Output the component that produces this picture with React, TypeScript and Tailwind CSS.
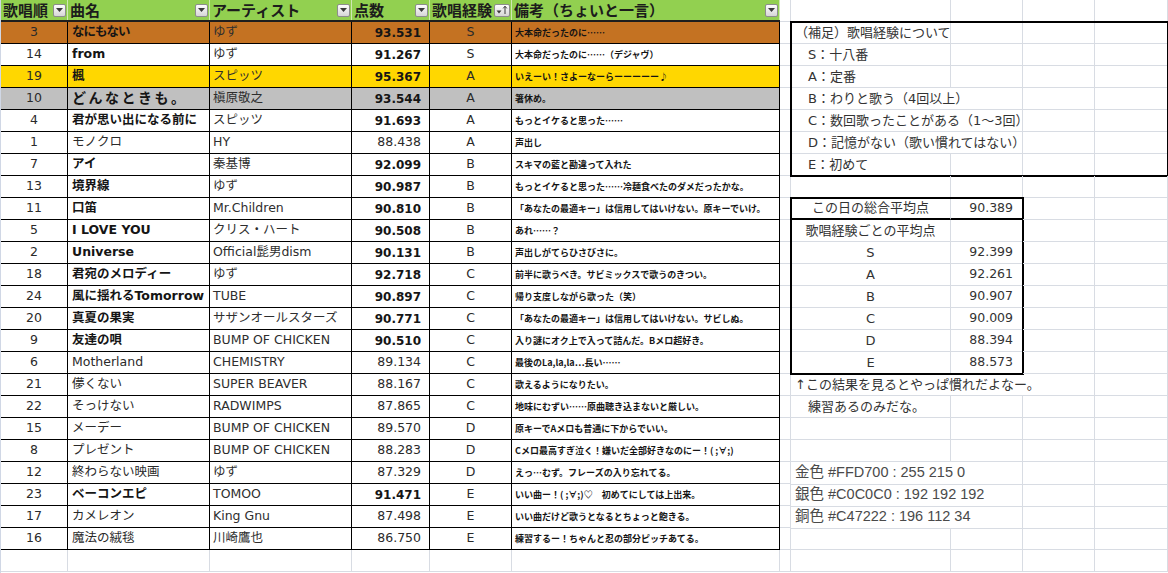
import React from "react";

type Row = { n: number; t: string; a: string; s: string; g: string; r: string; bg?: string; ts?: string };

const ROWS: Row[] = [
  { n: 3, t: "なにもない", a: "ゆず", s: "93.531", g: "S", r: "大本命だったのに……", bg: "bg-[#c47222]", ts: "text-[12.5px] tracking-[-1px]" },
  { n: 14, t: "from", a: "ゆず", s: "91.267", g: "S", r: "大本命だったのに……（デジャヴ）" },
  { n: 19, t: "楓", a: "スピッツ", s: "95.367", g: "A", r: "いえーい！さよーなーらーーーーー♪", bg: "bg-[#ffd700]" },
  { n: 10, t: "どんなときも。", a: "槇原敬之", s: "93.544", g: "A", r: "箸休め。", bg: "bg-[#c0c0c0]", ts: "text-[14px] tracking-[2.5px]" },
  { n: 4, t: "君が思い出になる前に", a: "スピッツ", s: "91.693", g: "A", r: "もっとイケると思った……" },
  { n: 1, t: "モノクロ", a: "HY", s: "88.438", g: "A", r: "声出し" },
  { n: 7, t: "アイ", a: "秦基博", s: "92.099", g: "B", r: "スキマの藍と勘違って入れた" },
  { n: 13, t: "境界線", a: "ゆず", s: "90.987", g: "B", r: "もっとイケると思った……冷麺食べたのダメだったかな。" },
  { n: 11, t: "口笛", a: "Mr.Children", s: "90.810", g: "B", r: "「あなたの最適キー」は信用してはいけない。原キーでいけ。" },
  { n: 5, t: "I LOVE YOU", a: "クリス・ハート", s: "90.508", g: "B", r: "あれ……？" },
  { n: 2, t: "Universe", a: "Official髭男dism", s: "90.131", g: "B", r: "声出しがてらひさびさに。" },
  { n: 18, t: "君宛のメロディー", a: "ゆず", s: "92.718", g: "C", r: "前半に歌うべき。サビミックスで歌うのきつい。" },
  { n: 24, t: "風に揺れるTomorrow", a: "TUBE", s: "90.897", g: "C", r: "帰り支度しながら歌った（笑）" },
  { n: 20, t: "真夏の果実", a: "サザンオールスターズ", s: "90.771", g: "C", r: "「あなたの最適キー」は信用してはいけない。サビしぬ。" },
  { n: 9, t: "友達の唄", a: "BUMP OF CHICKEN", s: "90.510", g: "C", r: "入り謎にオク上で入って詰んだ。Bメロ超好き。" },
  { n: 6, t: "Motherland", a: "CHEMISTRY", s: "89.134", g: "C", r: "最後のLa,la,la…長い……" },
  { n: 21, t: "儚くない", a: "SUPER BEAVER", s: "88.167", g: "C", r: "歌えるようになりたい。" },
  { n: 22, t: "そっけない", a: "RADWIMPS", s: "87.865", g: "C", r: "地味にむずい……原曲聴き込まないと厳しい。" },
  { n: 15, t: "メーデー", a: "BUMP OF CHICKEN", s: "89.570", g: "D", r: "原キーでAメロも普通に下からでいい。" },
  { n: 8, t: "プレゼント", a: "BUMP OF CHICKEN", s: "88.283", g: "D", r: "Cメロ最高すぎ泣く！嫌いだ全部好きなのにー！( ;∀;)" },
  { n: 12, t: "終わらない映画", a: "ゆず", s: "87.329", g: "D", r: "えっ…むず。フレーズの入り忘れてる。" },
  { n: 23, t: "ベーコンエピ", a: "TOMOO", s: "91.471", g: "E", r: "いい曲ー！( ;∀;)♡　初めてにしては上出来。" },
  { n: 17, t: "カメレオン", a: "King Gnu", s: "87.498", g: "E", r: "いい曲だけど歌うとなるとちょっと飽きる。" },
  { n: 16, t: "魔法の絨毯", a: "川崎鷹也", s: "86.750", g: "E", r: "練習するー！ちゃんと忍の部分ピッチあてる。" },
];

const F_MAIN = "font-['DejaVu_Sans','Noto_Sans_CJK_JP',sans-serif]";
const F_JP = "font-['Noto_Sans_CJK_JP',sans-serif]";
const F_ARIAL = "font-['Liberation_Sans','Noto_Sans_CJK_JP',sans-serif]";

const LEFT_COLS = "grid-cols-[67px_142px_142px_78px_82px_268px]";

function FilterBtn() {
  return (
    <div className="flex h-[13px] w-[13px] shrink-0 items-center justify-center rounded-[2px] border border-[#8d8d8d] bg-linear-to-b from-[#fdfdfd] to-[#d6d6d6]">
      <svg width="7" height="4" viewBox="0 0 7 4">
        <path d="M0 0h7L3.5 4z" fill="#3a3a3a" />
      </svg>
    </div>
  );
}

function SortBtn() {
  return (
    <div className="flex h-[13px] w-[16px] shrink-0 items-center justify-center rounded-[2px] border border-[#8d8d8d] bg-linear-to-b from-[#fdfdfd] to-[#d6d6d6]">
      <svg width="12" height="10" viewBox="0 0 12 10">
        <path d="M0.5 5.5h5L3 8.5z" fill="#3a3a3a" />
        <path d="M9 9V1.5M7.2 3.4L9 1.2L10.8 3.4" stroke="#3a3a3a" strokeWidth="1" fill="none" />
      </svg>
    </div>
  );
}

function HeaderCell({ label, sort }: { label: string; sort?: boolean }) {
  return (
    <div className="flex items-center justify-between border-r border-[#cfe8b3] pl-[2px] pr-[1px]">
      <span className={`${F_JP} whitespace-nowrap text-[15px] font-bold leading-[20px] text-[#1c1c1c]`}>{label}</span>
      {sort ? <SortBtn /> : <FilterBtn />}
    </div>
  );
}

function LeftTable() {
  return (
    <div className="flex w-[780px] shrink-0 flex-col border-l border-[#d0d7e5]">
      <div className={`grid h-[22px] ${LEFT_COLS} border-b-2 border-[#1e1e1e] bg-[#92d050]`}>
        <HeaderCell label="歌唱順" />
        <HeaderCell label="曲名" />
        <HeaderCell label="アーティスト" />
        <HeaderCell label="点数" />
        <HeaderCell label="歌唱経験" sort />
        <HeaderCell label="備考（ちょいと一言）" />
      </div>
      {ROWS.map((r) => {
        const bold = parseFloat(r.s) >= 90;
        return (
          <div key={r.n} className={`grid h-[22px] ${LEFT_COLS} border-b border-black ${r.bg ?? "bg-white"}`}>
            <div className={`${F_MAIN} flex items-center justify-center border-r border-black text-[12.5px] text-[#2a2a2a]`}>{r.n}</div>
            <div
              className={`${F_MAIN} flex items-center overflow-hidden whitespace-nowrap border-r border-black pl-[4px] ${r.ts ?? "text-[12.5px]"} ${
                bold ? "font-bold text-[#151515]" : "text-[#2a2a2a]"
              }`}
            >
              {r.t}
            </div>
            <div className={`${F_MAIN} flex items-center overflow-hidden whitespace-nowrap border-r border-black pl-[3px] text-[12.5px] text-[#2e2e2e]`}>{r.a}</div>
            <div
              className={`${F_MAIN} flex items-center justify-end border-r border-black pr-[8px] ${
                bold ? "text-[12px] font-bold text-[#151515]" : "text-[12.5px] text-[#2a2a2a]"
              }`}
            >
              {r.s}
            </div>
            <div className={`${F_MAIN} flex items-center justify-center border-r border-black text-[12.5px] text-[#2a2a2a]`}>{r.g}</div>
            <div className={`${F_JP} flex items-center overflow-hidden whitespace-nowrap border-r border-black pl-[3px] text-[9px] font-bold text-[#141414]`}>{r.r}</div>
          </div>
        );
      })}
      <div className={`grid h-[22px] ${LEFT_COLS} border-b border-[#d8dce3]`}>
        {[0, 1, 2, 3, 4, 5].map((i) => (
          <div key={i} className="border-r border-[#d8dce3]" />
        ))}
      </div>
    </div>
  );
}

type RCell = { span?: 1 | 2 | 3; text?: React.ReactNode; cls?: string };

const SPAN: Record<number, string> = { 1: "", 2: "col-span-2", 3: "col-span-3" };

function RRow({ cols, cells, rowCls }: { cols: string; cells: RCell[]; rowCls?: string }) {
  return (
    <div className={`grid h-[22px] ${cols} ${rowCls ?? ""}`}>
      {cells.map((c, i) => (
        <div
          key={i}
          className={`flex items-center whitespace-nowrap border-r border-b border-[#d8dce3] ${SPAN[c.span ?? 1]} ${c.cls ?? ""}`}
        >
          {c.text}
        </div>
      ))}
    </div>
  );
}

const C4 = "grid-cols-[160px_72px_72px_73px]";
const C2H = "grid-cols-[160px_72px]";
const C2J = "grid-cols-[72px_73px]";

const NOTE = `${F_MAIN} pl-[4px] text-[13px] text-[#333]`;
const NUM = `${F_MAIN} justify-end pr-[9px] text-[12.5px] text-[#333]`;
const CEN = `${F_MAIN} justify-center text-[13px] text-[#333]`;
const COLOR = `${F_ARIAL} pl-[4px] text-[14.5px] text-[#4a4a4a]`;

const empty4: RCell[] = [{}, {}, {}, {}];

function RightPanel() {
  return (
    <div className="flex w-[388px] shrink-0">
      <div className="flex w-[11px] flex-col">
        {Array.from({ length: 26 }).map((_, i) => (
          <div key={i} className="h-[22px] border-r border-b border-[#d8dce3]" />
        ))}
      </div>
      <div className="flex w-[377px] flex-col">
        <RRow cols={C4} cells={empty4} />
        <div className="outline-2 outline-solid outline-black outline-offset-[-1px]">
          <RRow cols={C4} cells={[{ text: "（補足）歌唱経験について", cls: NOTE }, {}, {}, {}]} />
          <RRow cols={C4} cells={[{ text: "　S：十八番", cls: NOTE }, {}, {}, {}]} />
          <RRow cols={C4} cells={[{ text: "　A：定番", cls: NOTE }, {}, {}, {}]} />
          <RRow cols={C4} cells={[{ span: 2, text: "　B：わりと歌う（4回以上）", cls: NOTE }, {}, {}]} />
          <RRow cols={C4} cells={[{ span: 2, text: "　C：数回歌ったことがある（1～3回）", cls: NOTE }, {}, {}]} />
          <RRow cols={C4} cells={[{ span: 2, text: "　D：記憶がない（歌い慣れてはない）", cls: NOTE }, {}, {}]} />
          <RRow cols={C4} cells={[{ text: "　E：初めて", cls: NOTE }, {}, {}, {}]} />
        </div>
        <RRow cols={C4} cells={empty4} />
        <div className="flex">
          <div className="w-[232px] outline-2 outline-solid outline-black outline-offset-[-1px]">
            <RRow
              cols={C2H}
              cells={[
                { text: "この日の総合平均点", cls: `${CEN} border-b-2 border-b-black` },
                { text: "90.389", cls: `${NUM} border-b-2 border-b-black` },
              ]}
            />
            <RRow cols={C2H} cells={[{ text: "歌唱経験ごとの平均点", cls: CEN }, {}]} />
            {[
              ["S", "92.399"],
              ["A", "92.261"],
              ["B", "90.907"],
              ["C", "90.009"],
              ["D", "88.394"],
              ["E", "88.573"],
            ].map(([g, v]) => (
              <RRow key={g} cols={C2H} cells={[{ text: g, cls: CEN }, { text: v, cls: NUM }]} />
            ))}
          </div>
          <div className="flex w-[145px] flex-col">
            {Array.from({ length: 8 }).map((_, i) => (
              <RRow key={i} cols={C2J} cells={[{}, {}]} />
            ))}
          </div>
        </div>
        <RRow cols={C4} cells={[{ span: 3, text: "↑この結果を見るとやっぱ慣れだよなー。", cls: NOTE }, {}]} />
        <RRow cols={C4} cells={[{ text: "　練習あるのみだな。", cls: NOTE }, {}, {}, {}]} />
        <RRow cols={C4} cells={empty4} />
        <RRow cols={C4} cells={empty4} />
        <RRow cols={C4} cells={[{ span: 2, text: "金色 #FFD700 : 255 215 0", cls: COLOR }, {}, {}]} />
        <RRow cols={C4} cells={[{ span: 2, text: "銀色 #C0C0C0 : 192 192 192", cls: COLOR }, {}, {}]} />
        <RRow cols={C4} cells={[{ span: 2, text: "銅色 #C47222 : 196 112 34", cls: COLOR }, {}, {}]} />
        <RRow cols={C4} cells={empty4} />
        <RRow cols={C4} cells={empty4} />
      </div>
    </div>
  );
}

export default function App() {
  return (
    <div className="flex h-[573px] w-[1168px] overflow-hidden bg-white">
      <LeftTable />
      <RightPanel />
    </div>
  );
}
